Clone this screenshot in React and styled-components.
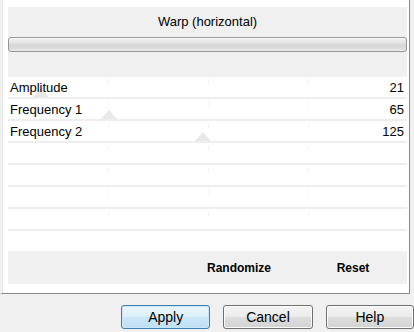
import React from 'react'
import styled, { createGlobalStyle } from 'styled-components'

const Global = createGlobalStyle`
  html, body {
    margin: 0;
    background: #f0f0f0;
    font-family: "Liberation Sans", Arial, sans-serif;
    color: #000;
  }
`

const Window = styled.div`
  width: 414px;
  height: 332px;
  overflow: hidden;
  background: #f0f0f0;
`

const Frame = styled.div`
  box-sizing: border-box;
  width: 410px;
  height: 294px;
  border-left: 2px solid #f0f0f0;
  border-right: 1px solid #8a8a8a;
  border-bottom: 1px solid #8a8a8a;
  background: #fff;
  box-shadow: inset 1px 0 0 #e2e2e2;
  padding: 7px 2px 0 6px;
  display: flex;
  flex-direction: column;
`

const Header = styled.div`
  height: 70px;
  background: #f0f0f0;
  display: flex;
  flex-direction: column;
`

const Title = styled.div`
  height: 30px;
  font-size: 13px;
  line-height: 30px;
  text-align: center;
`

const Bar = styled.div`
  box-sizing: border-box;
  height: 15px;
  border: 1px solid #979797;
  border-radius: 3px;
  background: linear-gradient(#f3f3f3 0%, #e6e6e6 30%, #d6d6d6 55%, #dcdcdc 80%, #ececec 100%);
  box-shadow: inset 0 1px 0 #fbfbfb;
`

const Row = styled.div`
  position: relative;
  box-sizing: border-box;
  height: 22px;
  border-bottom: 2px solid #eeeeee;
  display: flex;
  align-items: center;
  justify-content: space-between;
  padding: 0 3px 0 2px;
  font-size: 13px;
  background:
    linear-gradient(#f3f3f3, #f3f3f3) 100px 2px / 1px 5px no-repeat,
    linear-gradient(#f3f3f3, #f3f3f3) 200px 2px / 1px 5px no-repeat,
    linear-gradient(#f3f3f3, #f3f3f3) 300px 2px / 1px 5px no-repeat;
`

const Label = styled.span`
  position: relative;
  z-index: 1;
`

const Thumb = styled.span`
  position: absolute;
  bottom: 0;
  width: 0;
  height: 0;
  margin-left: -8px;
  border-left: 8px solid transparent;
  border-right: 8px solid transparent;
  border-bottom: 9px solid #e8e8e8;
`

const Spacer = styled.div`
  flex: 1;
`

const Footer = styled.div`
  height: 33px;
  margin-bottom: 9px;
  background: #f0f0f0;
  display: flex;
  justify-content: flex-end;
  align-items: center;
`

const Action = styled.div`
  width: ${p => p.w}px;
  text-align: center;
  font-size: 12px;
  font-weight: bold;
`

const Buttons = styled.div`
  display: flex;
  gap: 13px;
  padding: 11px 0 0 121px;
`

const Button = styled.div`
  box-sizing: border-box;
  width: ${p => p.w || 90}px;
  height: 24px;
  border-radius: 3px;
  border: 1px solid ${p => (p.primary ? '#3c7fb1' : '#707070')};
  background: ${p =>
    p.primary
      ? 'linear-gradient(#eaf6fd 0%, #dcf0fb 50%, #cbe7f7 51%, #bddff3 100%)'
      : 'linear-gradient(#f4f4f4 0%, #ebebeb 50%, #dedede 51%, #d2d2d2 100%)'};
  box-shadow: inset 0 0 0 1px ${p => (p.primary ? '#c9e7f8' : '#fcfcfc')};
  font-size: 14px;
  line-height: 22px;
  text-align: center;
`

const params = [
  { name: 'Amplitude', value: 21 },
  { name: 'Frequency 1', value: 65 },
  { name: 'Frequency 2', value: 125 },
]

export default function App() {
  const rows = [...params, null, null, null, null]
  return (
    <Window>
      <Global />
      <Frame>
        <Header>
          <Title>Warp (horizontal)</Title>
          <Bar />
        </Header>
        {rows.map((p, i) => (
          <Row key={i}>
            {p && (
              <>
                <Thumb style={{ left: `${(p.value / 255) * 398}px` }} />
                <Label>{p.name}</Label>
                <Label>{p.value}</Label>
              </>
            )}
          </Row>
        ))}
        <Spacer />
        <Footer>
          <Action w={120}>Randomize</Action>
          <Action w={108}>Reset</Action>
        </Footer>
      </Frame>
      <Buttons>
        <Button primary w={90}>Apply</Button>
        <Button w={90}>Cancel</Button>
        <Button w={89}>Help</Button>
      </Buttons>
    </Window>
  )
}
